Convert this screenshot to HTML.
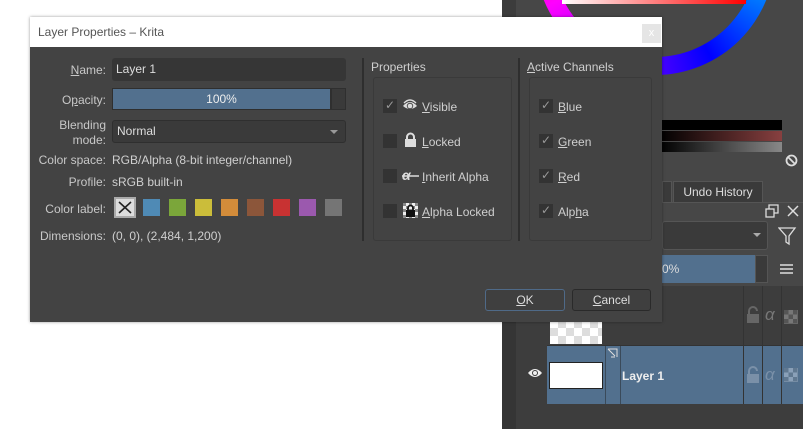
<!DOCTYPE html><html><head><style>
*{margin:0;padding:0;box-sizing:border-box}
body{width:803px;height:429px;overflow:hidden;background:#fff;position:relative;font-family:"Liberation Sans","DejaVu Sans",sans-serif;font-size:12px;color:#cfcfcf}
.a{position:absolute}
u{text-decoration:underline}
.lbl{position:absolute;text-align:right;width:76px;left:30px;color:#c8c8c8}
.cb{position:absolute;width:14px;height:14px;background:#333}
.cb.c::after{content:"✓";position:absolute;left:2px;top:-1px;color:#999;font-size:12px;font-family:"DejaVu Sans",sans-serif}
.sw{position:absolute;top:199px;width:17px;height:17px}
</style></head><body>
<div class="a" style="left:502px;top:0;width:301px;height:429px;background:#474747"></div>
<div class="a" style="left:502px;top:0;width:14px;height:429px;background:#3c3c3c"></div>
<div class="a" style="left:535px;top:-165px;width:240px;height:240px;border-radius:50%;background:conic-gradient(from 0deg,#f00,#ff0 8%,#0f0 15%,#0ff 22%,#08f 30%,#00f 42%,#80f 56%,#f0f 68%,#f08 76%,#f00)"></div>
<div class="a" style="left:553px;top:-147px;width:204px;height:204px;border-radius:50%;background:#474747"></div>
<div class="a" style="left:562px;top:0;width:184px;height:4px;background:linear-gradient(90deg,#fff,#f00)"></div>
<div class="a" style="left:660px;top:120px;width:122px;height:10px;background:#000"></div>
<div class="a" style="left:660px;top:131px;width:122px;height:10px;background:linear-gradient(90deg,#000,#884040)"></div>
<div class="a" style="left:660px;top:142px;width:122px;height:10px;background:linear-gradient(90deg,#000,#888)"></div>
<svg class="a" style="left:785px;top:154px" width="13" height="13"><circle cx="6.5" cy="6.5" r="5" fill="none" stroke="#ddd" stroke-width="1.8"/><line x1="3" y1="3" x2="10" y2="10" stroke="#ddd" stroke-width="1.8"/></svg>
<div class="a" style="left:662px;top:181px;width:10px;height:22px;background:#3a3a3a;border:1px solid #555"></div>
<div class="a" style="left:673px;top:181px;width:90px;height:22px;background:#3a3a3a;border:1px solid #555;border-bottom:none;text-align:center;line-height:20px;color:#ddd">Undo History</div>
<div class="a" style="left:662px;top:202px;width:141px;height:1px;background:#555"></div>
<svg class="a" style="left:765px;top:204px" width="14" height="14"><rect x="1" y="5" width="8" height="8" fill="none" stroke="#ddd" stroke-width="1.3"/><path d="M4 5V1h9v8H9" fill="none" stroke="#ddd" stroke-width="1.3"/></svg>
<svg class="a" style="left:787px;top:205px" width="12" height="12"><path d="M1 1L11 11M11 1L1 11" stroke="#ddd" stroke-width="1.5"/></svg>
<div class="a" style="left:662px;top:221px;width:106px;height:29px;background:#3a3a3a;border:1px solid #555;border-radius:3px"></div>
<div class="a" style="left:753px;top:233px;border:4px solid transparent;border-top:4px solid #aaa"></div>
<svg class="a" style="left:778px;top:226px" width="22" height="22"><path d="M1 2H17L11 10V18L8 16V10Z" fill="none" stroke="#ddd" stroke-width="1.3"/></svg>
<div class="a" style="left:662px;top:255px;width:93px;height:28px;background:#52708e;line-height:28px;color:#ddd">0%</div>
<div class="a" style="left:755px;top:255px;width:13px;height:28px;background:#3a3a3a;border:1px solid #555"></div>
<svg class="a" style="left:780px;top:264px" width="13" height="10"><path d="M0 1H13M0 5H13M0 9H13" stroke="#ddd" stroke-width="1.5"/></svg>
<div class="a" style="left:502px;top:286px;width:301px;height:143px;background:#3d3d3d"></div>
<div class="a" style="left:502px;top:286px;width:14px;height:143px;background:#353535"></div>
<div class="a" style="left:547px;top:286px;width:256px;height:60px;background:#3d3d3d;border-bottom:1px solid #333"></div>
<div class="a" style="left:550px;top:320px;width:52px;height:24px;background:repeating-conic-gradient(#ddd 0 25%,#fff 0 50%) 0 0/16px 16px"></div>
<div class="a" style="left:547px;top:346px;width:256px;height:58px;background:#52708e"></div>
<div class="a" style="left:549px;top:362px;width:54px;height:27px;background:#fff;border:1px solid #222"></div>
<div class="a" style="left:605px;top:346px;width:1px;height:58px;background:#3a4a5a"></div>
<div class="a" style="left:620px;top:346px;width:1px;height:58px;background:#3a4a5a"></div>
<div class="a" style="left:743px;top:286px;width:1px;height:118px;background:#333"></div>
<div class="a" style="left:762px;top:286px;width:1px;height:118px;background:#333"></div>
<div class="a" style="left:781px;top:286px;width:1px;height:118px;background:#333"></div>
<div class="a" style="left:622px;top:369px;font-weight:bold;color:#eee">Layer 1</div>
<svg class="a" style="left:527px;top:367px" width="16" height="12"><path d="M1 6Q8 -2 15 6Q8 14 1 6Z" fill="#eee"/><circle cx="8" cy="6" r="3" fill="#3d3d3d"/><circle cx="8" cy="6" r="2" fill="#eee"/></svg>
<svg class="a" style="left:746px;top:306px" width="14" height="18"><path d="M3 8V5a4 4 0 0 1 8 0" fill="none" stroke="#666" stroke-width="2"/><rect x="1" y="8" width="12" height="9" fill="#666"/></svg>
<svg class="a" style="left:746px;top:366px" width="14" height="18"><path d="M3 8V5a4 4 0 0 1 8 0" fill="none" stroke="#7a90a8" stroke-width="2"/><rect x="1" y="8" width="12" height="9" fill="#7a90a8"/></svg>
<div class="a" style="left:765px;top:305px;color:#777;font-size:17px;font-style:italic">α</div>
<div class="a" style="left:765px;top:365px;color:#7a90a8;font-size:17px;font-style:italic">α</div>
<div class="a" style="left:784px;top:310px;width:14px;height:14px;background:repeating-conic-gradient(#777 0 25%,#555 0 50%) 0 0/9px 9px"></div>
<div class="a" style="left:784px;top:368px;width:14px;height:14px;background:repeating-conic-gradient(#8aa0b8 0 25%,#607890 0 50%) 0 0/9px 9px"></div>
<svg class="a" style="left:607px;top:348px" width="12" height="12"><path d="M1 1H10V9M1 1L8 8M4 9H8" fill="none" stroke="#ddd" stroke-width="1"/></svg>

<!-- dialog -->
<div class="a" style="left:30px;top:17px;width:632px;height:305px;background:#434343;box-shadow:0 0 3px rgba(0,0,0,.4)"></div>
<div class="a" style="left:30px;top:17px;width:632px;height:30px;background:#fff;color:#555;padding:8px 8px;font-size:12px">Layer Properties – Krita</div>
<div class="a" style="left:642px;top:24px;width:19px;height:19px;background:#e5e5e5;color:#fff;text-align:center;font-size:11px;line-height:19px">x</div>

<div class="lbl" style="top:63px"><u>N</u>ame:</div>
<div class="a" style="left:112px;top:58px;width:234px;height:23px;background:#363636;border-radius:3px;padding:4px 4px;color:#ddd">Layer 1</div>
<div class="lbl" style="top:93px">O<u>p</u>acity:</div>
<div class="a" style="left:112px;top:88px;width:219px;height:22px;background:#52708e;border:1px solid #2f2f2f;text-align:center;line-height:20px;color:#eee">100%</div>
<div class="a" style="left:331px;top:88px;width:15px;height:22px;background:#3a3a3a;border:1px solid #2f2f2f"></div>
<div class="lbl" style="top:118px;line-height:15px">Blending<br>mode:</div>
<div class="a" style="left:112px;top:120px;width:234px;height:23px;background:#3a3a3a;border:1px solid #2f2f2f;border-radius:3px;padding:3px 4px;color:#ddd">Normal</div>
<div class="a" style="left:330px;top:130px;border:4px solid transparent;border-top:4px solid #999"></div>
<div class="lbl" style="top:153px">Color space:</div>
<div class="a" style="left:112px;top:153px">RGB/Alpha (8-bit integer/channel)</div>
<div class="lbl" style="top:175px">Profile:</div>
<div class="a" style="left:112px;top:175px">sRGB built-in</div>
<div class="lbl" style="top:202px">Color label:</div>
<div class="a" style="left:114px;top:197px;width:22px;height:21px;background:#ddd;border:2px solid #aaa"></div>
<svg class="a" style="left:117px;top:200px" width="16" height="15"><path d="M2 2L14 13M14 2L2 13" stroke="#222" stroke-width="1.6"/></svg>
<div class="sw" style="left:143px;background:#4f8ab5"></div>
<div class="sw" style="left:169px;background:#7ba63a"></div>
<div class="sw" style="left:195px;background:#cbbd3a"></div>
<div class="sw" style="left:221px;background:#d38c3a"></div>
<div class="sw" style="left:247px;background:#8c563a"></div>
<div class="sw" style="left:273px;background:#c83232"></div>
<div class="sw" style="left:299px;background:#9b59ae"></div>
<div class="sw" style="left:325px;background:#757575"></div>
<div class="lbl" style="top:229px">Dimensions:</div>
<div class="a" style="left:112px;top:229px">(0, 0), (2,484, 1,200)</div>

<div class="a" style="left:362px;top:58px;width:2px;height:183px;background:#2e2e2e"></div>
<div class="a" style="left:518px;top:58px;width:2px;height:183px;background:#2e2e2e"></div>
<div class="a" style="left:371px;top:60px">Properties</div>
<div class="a" style="left:527px;top:60px"><u>A</u>ctive Channels</div>
<div class="a" style="left:373px;top:77px;width:139px;height:164px;border:1px solid #3a3a3a;border-radius:3px"></div>
<div class="a" style="left:529px;top:77px;width:123px;height:164px;border:1px solid #3a3a3a;border-radius:3px"></div>

<div class="cb c" style="left:383px;top:99px"></div>
<svg class="a" style="left:402px;top:99px" width="16" height="14"><path d="M1 7Q8 -1 15 7Q8 13 1 7Z" fill="#ddd"/><circle cx="8" cy="7" r="3.2" fill="#434343"/><circle cx="8" cy="7" r="2.3" fill="#ddd"/><path d="M2 4Q8 -2 14 4" fill="none" stroke="#ddd" stroke-width="1.4"/></svg>
<div class="a" style="left:422px;top:100px"><u>V</u>isible</div>
<div class="cb" style="left:383px;top:134px"></div>
<svg class="a" style="left:404px;top:132px" width="13" height="16"><path d="M3 8V5a3.5 3.5 0 0 1 7 0V8" fill="none" stroke="#ddd" stroke-width="2"/><rect x="1" y="7" width="11" height="8" fill="#ddd"/></svg>
<div class="a" style="left:422px;top:135px"><u>L</u>ocked</div>
<div class="cb" style="left:383px;top:169px"></div>
<div class="a" style="left:402px;top:167px;color:#ddd;font-weight:bold;font-style:italic;font-size:14px">α</div>
<svg class="a" style="left:401px;top:170px" width="19" height="12"><path d="M1 6H18" stroke="#ddd" stroke-width="1.5"/></svg>
<div class="a" style="left:422px;top:170px"><u>I</u>nherit Alpha</div>
<div class="cb" style="left:383px;top:204px"></div>
<div class="a" style="left:403px;top:203px;width:15px;height:15px;background:repeating-conic-gradient(#eee 0 25%,#888 0 50%) 0 0/6px 6px"></div>
<svg class="a" style="left:404px;top:203px" width="13" height="15"><path d="M4 7V5a2.5 2.5 0 0 1 5 0V7" fill="none" stroke="#111" stroke-width="1.8"/><rect x="2" y="7" width="9" height="7" fill="#111"/></svg>
<div class="a" style="left:422px;top:205px"><u>A</u>lpha Locked</div>

<div class="cb c" style="left:539px;top:99px"></div><div class="a" style="left:558px;top:100px"><u>B</u>lue</div>
<div class="cb c" style="left:539px;top:134px"></div><div class="a" style="left:558px;top:135px"><u>G</u>reen</div>
<div class="cb c" style="left:539px;top:169px"></div><div class="a" style="left:558px;top:170px"><u>R</u>ed</div>
<div class="cb c" style="left:539px;top:204px"></div><div class="a" style="left:558px;top:205px">Alp<u>h</u>a</div>

<div class="a" style="left:485px;top:289px;width:80px;height:22px;background:#3f3f3f;border:1px solid #4f6a88;border-radius:3px;text-align:center;line-height:20px;color:#ddd"><u>O</u>K</div>
<div class="a" style="left:572px;top:289px;width:79px;height:22px;background:#3f3f3f;border:1px solid #2a2a2a;border-radius:3px;text-align:center;line-height:20px;color:#ddd"><u>C</u>ancel</div>
</body></html>
